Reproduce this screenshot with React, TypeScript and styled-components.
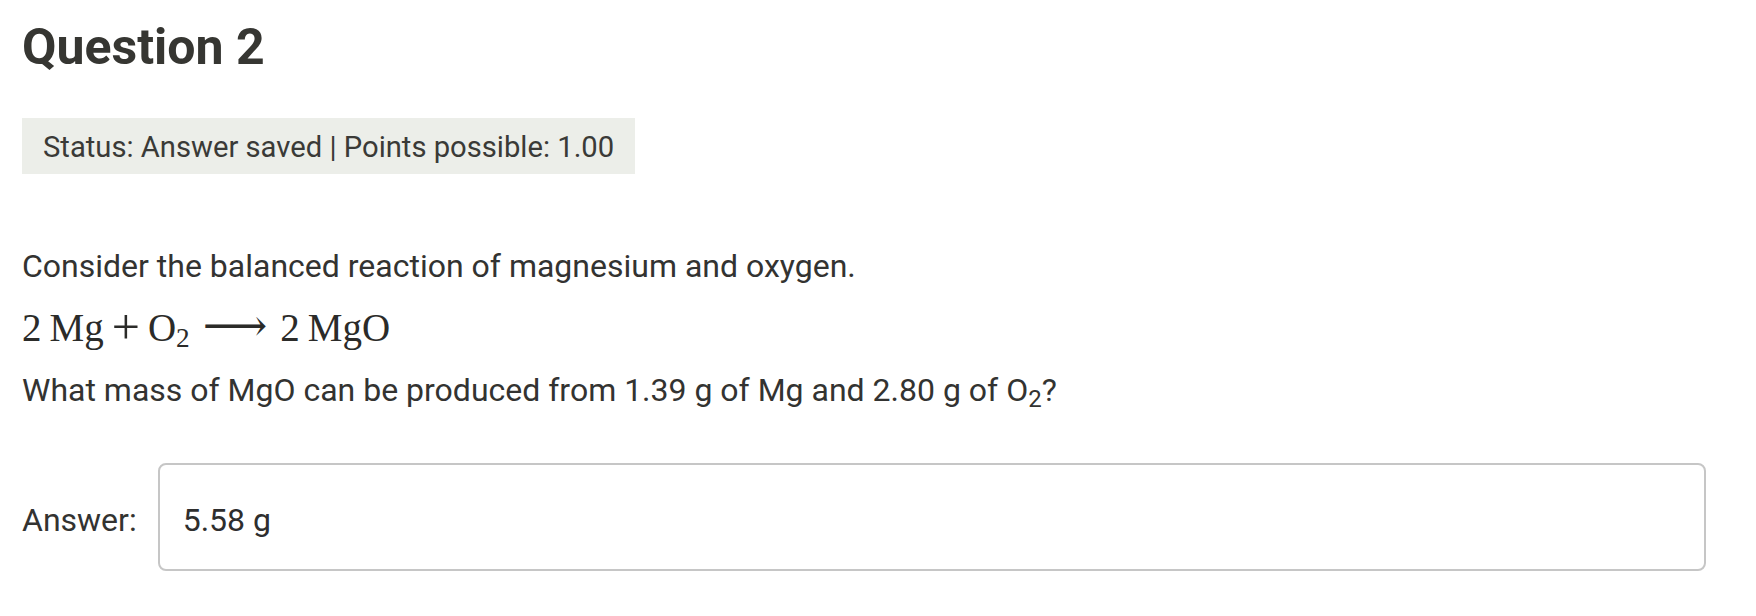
import React from 'react'
import styled, { createGlobalStyle } from 'styled-components'

const GlobalStyle = createGlobalStyle`
  body {
    margin: 0;
    background: #ffffff;
    font-family: Roboto, "Liberation Sans", sans-serif;
    color: #333331;
  }
`

const Page = styled.main`
  padding: 17px 50px 0 22px;
`

const Heading = styled.h2`
  margin: 0;
  font-size: 50px;
  line-height: 60px;
  font-weight: 700;
  color: #363632;
`

const StatusBar = styled.div`
  display: inline-block;
  margin-top: 41px;
  padding: 0 21px;
  height: 56px;
  line-height: 58px;
  font-size: 29.2px;
  background: #eceee9;
  color: #3a3a37;
`

const Body = styled.section`
  margin-top: 72px;
  display: flex;
  flex-direction: column;
  gap: 22px;
`

const Para = styled.p`
  margin: 0;
  font-size: 32px;
  line-height: 40px;

  sub {
    font-size: 0.75em;
    line-height: 0;
    vertical-align: -0.25em;
  }
`

const Equation = styled.div`
  font-family: "Liberation Serif", "DejaVu Serif", serif;
  font-size: 39px;
  line-height: 40px;
  color: #2b2b29;
  white-space: nowrap;
`

const Sp = styled.span<{ $w: number }>`
  display: inline-block;
  width: ${(p) => p.$w}px;
`

const Plus = styled.span`
  font-size: 50px;
  line-height: 0;
  vertical-align: -3px;
`

const Sub = styled.sub`
  font-size: 0.7em;
  vertical-align: -0.22em;
  line-height: 0;
`

const Arrow = styled.span`
  font-family: "DejaVu Serif", serif;
  font-size: 45px;
  line-height: 0;
`

const AnswerRow = styled.div`
  margin-top: 53px;
  display: flex;
  align-items: center;
  gap: 21px;
`

const Label = styled.label`
  font-size: 32px;
  margin-top: 6px;
`

const AnswerInput = styled.input`
  flex: 1;
  box-sizing: border-box;
  height: 108px;
  padding: 6px 23px 0;
  border: 2px solid #c6c6c6;
  border-radius: 8px;
  font-family: Roboto, "Liberation Sans", sans-serif;
  font-size: 32px;
  color: #2e2e2e;
  background: #fff;
  outline: none;
`

export default function App() {
  return (
    <>
      <GlobalStyle />
      <Page>
        <Heading>Question 2</Heading>
        <StatusBar>Status: Answer saved | Points possible: 1.00</StatusBar>
        <Body>
          <Para>Consider the balanced reaction of magnesium and oxygen.</Para>
          <Equation>
            2<Sp $w={8} />Mg<Sp $w={8} />
            <Plus>+</Plus>
            <Sp $w={8} />O<Sub>2</Sub>
            <Sp $w={13} />
            <Arrow>⟶</Arrow>
            <Sp $w={13} />2<Sp $w={8} />MgO
          </Equation>
          <Para>
            What mass of MgO can be produced from 1.39 g of Mg and 2.80 g of O<sub>2</sub>?
          </Para>
        </Body>
        <AnswerRow>
          <Label htmlFor="answer">Answer:</Label>
          <AnswerInput id="answer" readOnly defaultValue="5.58 g" />
        </AnswerRow>
      </Page>
    </>
  )
}
